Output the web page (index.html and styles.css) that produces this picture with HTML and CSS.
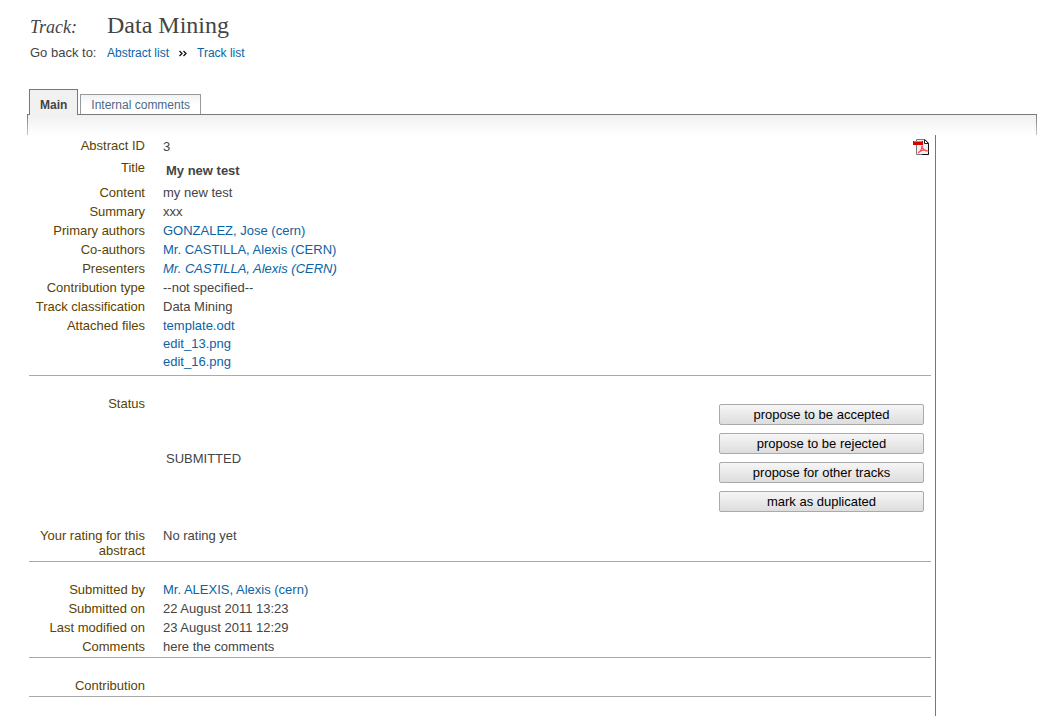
FILE: index.html
```html
<!DOCTYPE html>
<html lang="en">
<head>
<meta charset="utf-8">
<title>Track: Data Mining</title>
<link rel="stylesheet" href="styles.css">
</head>
<body>
<header class="header">
  <span class="kicker">Track:</span>
  <h1 class="title">Data Mining</h1>
  <span class="back">Go back to:</span>
  <nav class="crumbs">
    <a href="#">Abstract list</a>
    <svg class="arrows" width="8" height="8" viewBox="0 0 8 8" aria-hidden="true"><path d="M0.5 1L3 3.500L0.500 6M4.500 1L7 3.500L4.500 6" fill="none" stroke="#111" stroke-width="1.300"/></svg>
    <a href="#">Track list</a>
  </nav>
</header>
<nav class="tabs">
  <a class="tab active" href="#">Main</a>
  <a class="tab" href="#">Internal comments</a>
</nav>
<div class="strip"></div>
<main class="panel">
  <table class="details">
    <tbody>
      <tr class="id-row"><th scope="row">Abstract ID</th><td><div class="id-cell"><span>3</span>
        <a class="pdf" href="#" aria-label="PDF"><svg width="16" height="16" viewBox="0 0 16 16"><path d="M3.500 .5H12L15.500 4V15.500H3.500Z" fill="#f0f0f2" stroke="#777"/><path d="M15.500 4V15.500H9" fill="none" stroke="#111"/><path d="M11.500 1V4.500H15.500L11.500 .5" fill="#fff" stroke="#222"/><path d="M5 14C8 12 9 9 9 6.500C9 10 12 12 14.500 12C11 10 7 11.500 5 14" fill="none" stroke="#f05050" stroke-width="1.200"/><path d="M0 2H10V6H0Z" fill="#d90000"/><path d="M1 2.500H9" stroke="#ff6868"/></svg></a></div></td></tr>
      <tr class="title-row"><th scope="row">Title</th><td class="inset"><b>My new test</b></td></tr>
      <tr><th scope="row">Content</th><td>my new test</td></tr>
      <tr><th scope="row">Summary</th><td>xxx</td></tr>
      <tr><th scope="row">Primary authors</th><td><a href="#">GONZALEZ, Jose (cern)</a></td></tr>
      <tr><th scope="row">Co-authors</th><td><a href="#">Mr. CASTILLA, Alexis (CERN)</a></td></tr>
      <tr><th scope="row">Presenters</th><td><a href="#"><i>Mr. CASTILLA, Alexis (CERN)</i></a></td></tr>
      <tr><th scope="row">Contribution type</th><td>--not specified--</td></tr>
      <tr><th scope="row">Track classification</th><td>Data Mining</td></tr>
      <tr><th scope="row">Attached files</th><td><ul class="files"><li><a href="#">template.odt</a></li><li><a href="#">edit_13.png</a></li><li><a href="#">edit_16.png</a></li></ul></td></tr>
    </tbody>
    <tbody>
      <tr class="first"><th scope="row">Status</th><td class="inset"><div class="status"><span>SUBMITTED</span>
        <div class="actions">
          <button type="button">propose to be accepted</button>
          <button type="button">propose to be rejected</button>
          <button type="button">propose for other tracks</button>
          <button type="button">mark as duplicated</button>
        </div></div></td></tr>
      <tr><th scope="row">Your rating for this abstract</th><td>No rating yet</td></tr>
    </tbody>
    <tbody>
      <tr class="first"><th scope="row">Submitted by</th><td><a href="#">Mr. ALEXIS, Alexis (cern)</a></td></tr>
      <tr><th scope="row">Submitted on</th><td>22 August 2011 13:23</td></tr>
      <tr><th scope="row">Last modified on</th><td>23 August 2011 12:29</td></tr>
      <tr><th scope="row">Comments</th><td>here the comments</td></tr>
    </tbody>
    <tbody>
      <tr class="first"><th scope="row">Contribution</th><td></td></tr>
    </tbody>
  </table>
</main>
</body>
</html>
```
FILE: styles.css
```css
* { box-sizing: border-box; }
body {
  margin: 0;
  padding: 10px 6px 7px 27px;
  background: #fff;
  color: #444;
  font: 13px/15px "Liberation Sans", Arial, sans-serif;
}
a { color: #0b63a5; text-decoration: none; }
.header {
  display: grid;
  grid-template-columns: 77px 1fr;
  row-gap: 3px;
  align-items: baseline;
  padding-left: 3px;
}
.kicker { font: italic 18px/30px "Liberation Serif", Times, serif; }
.title { margin: 0; font: 24px/30px "Liberation Serif", Times, serif; }
.crumbs { display: flex; align-items: center; gap: 10px; font-size: 12px; }
.tabs {
  display: flex;
  align-items: flex-end;
  gap: 2px;
  margin-top: 28px;
  padding-left: 2px;
}
.tab {
  height: 20px;
  padding: 3px 10px 0;
  border: 1px solid #999;
  border-bottom: 0;
  background: linear-gradient(#f0f2f4, #fff 10px);
  color: #4e6985;
  font-size: 12px;
}
.tab.active {
  z-index: 1;
  height: 26px;
  margin-bottom: -1px;
  padding-top: 8px;
  border-color: #777;
  background: #f1f1f1;
  color: #444;
  font-weight: bold;
}
.strip {
  height: 21px;
  border: 1px solid;
  border-image: linear-gradient(#777, #ccc) 1;
  border-bottom: 0;
  background: linear-gradient(#f0f0f0, #fff);
}
.panel {
  width: 90%;
  padding: 1px 4px 19px 2px;
  border-right: 1px solid #777;
}
.details { width: 100%; border-collapse: separate; border-spacing: 0; }
.details th, .details td { padding: 2px 0; text-align: left; vertical-align: top; }
.details th { width: 116px; color: #5a4200; font-weight: normal; text-align: right; }
.details td { padding-left: 18px; }
.details td.inset { padding-left: 21px; }
.details tr:last-child > * { padding-bottom: 3px; border-bottom: 1px solid #aaa; }
.details .first > * { padding-top: 20px; }
.id-cell { display: flex; justify-content: space-between; line-height: 18px; }
.pdf { display: flex; padding: 1px 2px 0 0; }
.title-row td.inset { padding: 5px 0 5px 21px; }
.files { margin: 0; padding: 0 0 3px; list-style: none; }
.files li + li { padding-top: 3px; }
.status {
  display: flex;
  align-items: center;
  justify-content: space-between;
  padding: 8px 7px 12px 0;
}
.actions { display: grid; gap: 8px; width: 205px; }
.actions button {
  height: 21px;
  padding: 0;
  border: 1px solid #aaa;
  border-radius: 2px;
  background: linear-gradient(#f6f6f6, #ddd);
  color: #000;
  font: inherit;
}
```
